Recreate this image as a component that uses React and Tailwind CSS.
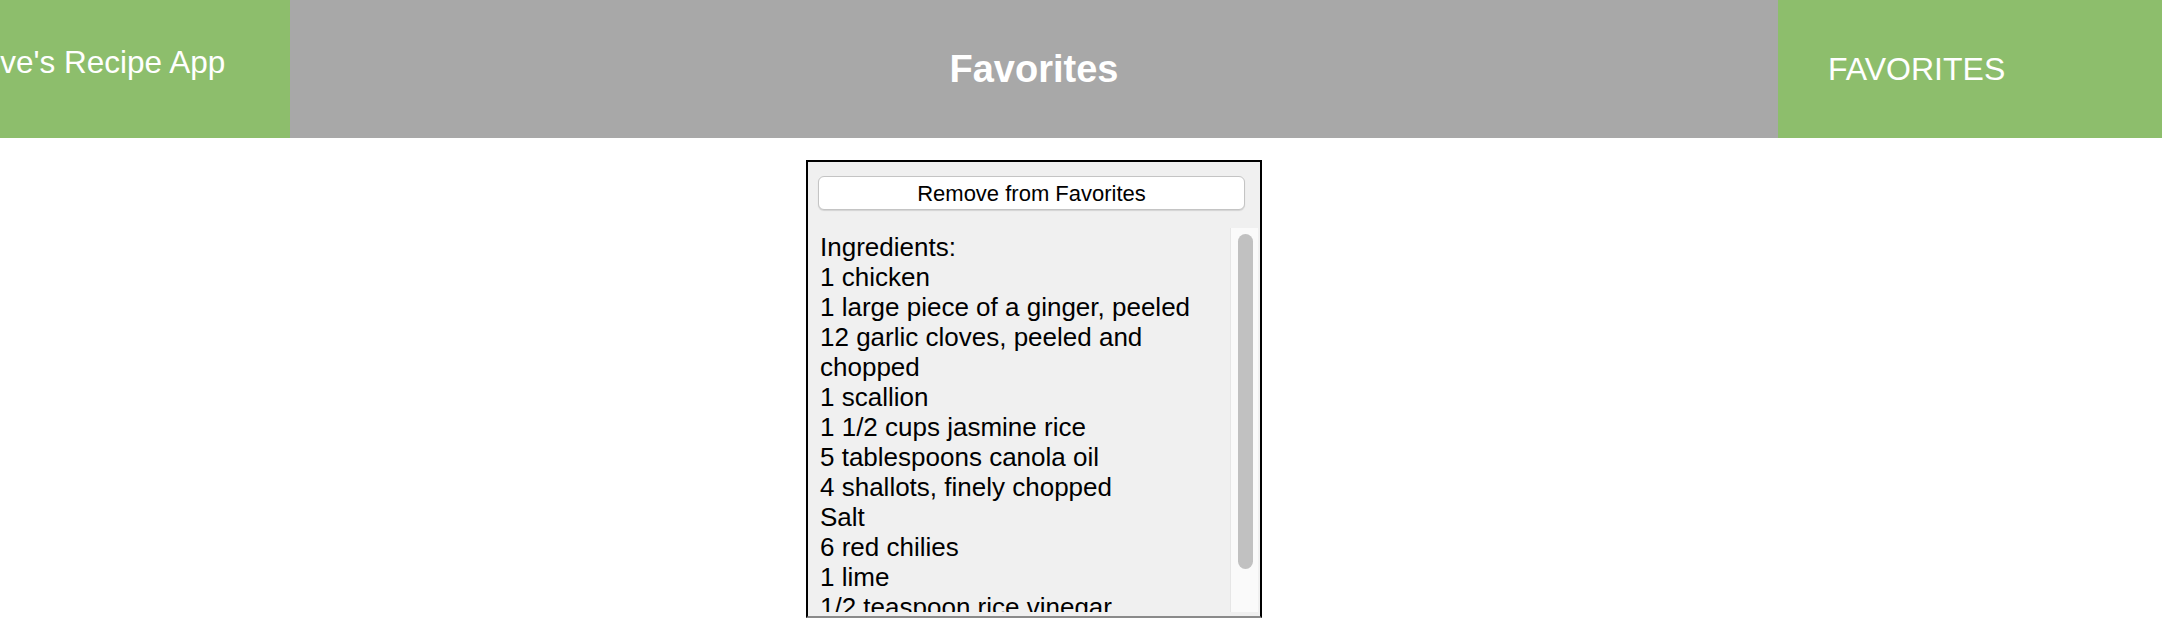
const ingredients = [
  'Ingredients:',
  '1 chicken',
  '1 large piece of a ginger, peeled',
  '12 garlic cloves, peeled and chopped',
  '1 scallion',
  '1 1/2 cups jasmine rice',
  '5 tablespoons canola oil',
  '4 shallots, finely chopped',
  'Salt',
  '6 red chilies',
  '1 lime',
  '1/2 teaspoon rice vinegar',
  '2 tablespoons soy sauce',
];

const Header = () => (
  <header className="flex h-[138px]">
    <div className="w-[290px] shrink-0 overflow-hidden bg-[#8dbe6c] pt-[44px]">
      <h2 className="ml-[-47px] whitespace-nowrap text-[31.5px] leading-[36px] text-white">Steve's Recipe App</h2>
    </div>
    <div className="flex flex-1 items-center justify-center bg-[#a8a8a8]">
      <h1 className="text-[38px] font-bold text-white">Favorites</h1>
    </div>
    <nav className="flex w-[384px] shrink-0 items-center bg-[#8dbe6c] pl-[50px]">
      <span className="text-[32px] text-white">FAVORITES</span>
    </nav>
  </header>
);

const RecipeCard = () => (
  <div className="flex h-[458px] w-[456px] flex-col border-2 border-black border-b-[#8a8a8a] bg-[#f0f0f0] pt-[14px] pb-[4px]">
    <button className="ml-[10px] h-[34px] w-[427px] rounded-[6px] border border-[#c4c4c4] bg-white pt-[2px] text-[22px] leading-none text-black shadow-[0_1px_1px_rgba(0,0,0,0.12)]">
      Remove from Favorites
    </button>
    <div className="mt-[18px] mr-[2px] flex h-[384px] overflow-hidden">
      <div className="flex-1 pl-[12px] pt-[4px] text-[26px] leading-[30px] text-black">
        {ingredients.map((line) => (
          <div key={line}>{line}</div>
        ))}
      </div>
      <div className="w-[28px] shrink-0 border-l border-[#e6e6e6] bg-[#fafafa]">
        <div className="mt-[6px] ml-[7px] h-[335px] w-[15px] rounded-full bg-[#c1c1c1]" />
      </div>
    </div>
  </div>
);

export default function App() {
  return (
    <div className="min-h-screen bg-white font-['Liberation_Sans',Arial,sans-serif]">
      <Header />
      <main className="flex">
        <div className="w-[290px] shrink-0" />
        <div className="flex flex-1 justify-center pt-[22px]">
          <RecipeCard />
        </div>
        <div className="w-[384px] shrink-0" />
      </main>
    </div>
  );
}
